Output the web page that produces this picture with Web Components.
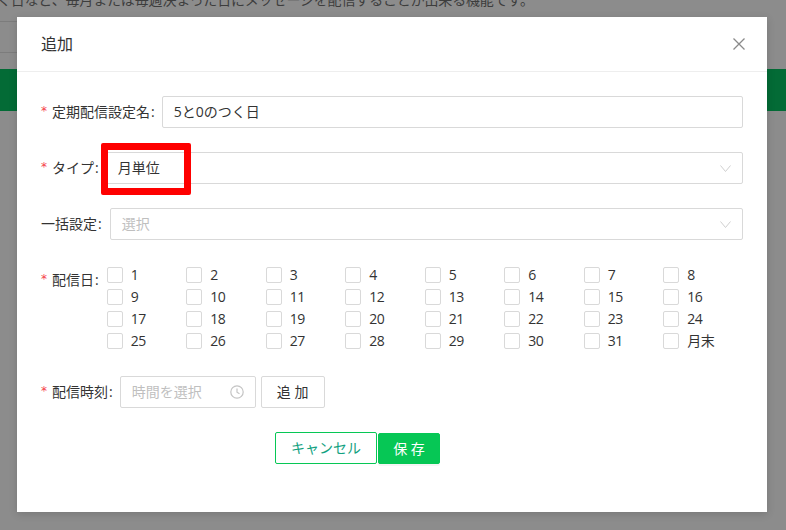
<!DOCTYPE html>
<html lang="ja">
<head>
<meta charset="utf-8">
<style>
html, body { margin: 0; height: 100%; }
body {
  width: 786px; height: 530px; overflow: hidden;
  font-family: "Open Sans", "Noto Sans CJK JP", sans-serif;
  font-size: 14px; color: #333;
}
</style>
</head>
<body>
<app-backdrop>
  <add-dialog>
    <form-row label="定期配信設定名" required><text-box value="5と0のつく日"></text-box></form-row>
    <form-row label="タイプ" required><text-box value="月単位" select marked></text-box></form-row>
    <form-row label="一括設定"><text-box placeholder="選択" select></text-box></form-row>
    <form-row label="配信日" required top><day-grid></day-grid></form-row>
    <form-row label="配信時刻" required>
      <time-box></time-box>
      <plain-button>追 加</plain-button>
    </form-row>
    <div slot="footer">
      <plain-button kind="outline">キャンセル</plain-button><plain-button kind="primary">保 存</plain-button>
    </div>
  </add-dialog>
</app-backdrop>

<script>
function define(name, css, html) {
  customElements.define(name, class extends HTMLElement {
    connectedCallback() {
      if (this.shadowRoot) return;
      const root = this.attachShadow({ mode: 'open' });
      root.innerHTML = '<style>' + css + '</style>' + (typeof html == 'function' ? html(this) : html);
    }
  });
}

define('app-backdrop', `
  :host { display: block; position: relative; width: 786px; height: 530px; background: #8c8c8c; overflow: hidden; }
  .notice { height: 25px; line-height: 8px; font-size: 14px; color: #3d3d3d; white-space: nowrap; margin: -4px 0 0 -3px; letter-spacing: -.16px; }
  .rule { width: 120px; height: 1px; background: #7c7c7c; }
  .rule.two { margin-top: 30px; }
  .band { height: 42px; background: #036b36; margin-top: 16px; }
  .dialog { position: absolute; left: 17px; top: 17px; }
`, `
  <div class="notice">く日など、毎月または毎週決まった日にメッセージを配信することが出来る機能です。</div>
  <div class="rule"></div>
  <div class="rule two"></div>
  <div class="band"></div>
  <div class="dialog"><slot></slot></div>
`);

define('add-dialog', `
  :host { display: block; width: 750px; height: 495px; background: #fff; box-shadow: 0 2px 8px rgba(0,0,0,.15); }
  header { height: 55px; box-sizing: border-box; border-bottom: 1px solid #eee; display: flex; align-items: center; justify-content: space-between; padding: 0 22px 0 24px; font-size: 16px; color: #333; }
  header span { margin-bottom: 2px; }
  header svg { display: block; }
  .body { padding: 24px 24px 0 24px; }
  .foot { padding-left: 258px; }
`, `
  <header><span>追加</span>
    <svg width="12" height="12" viewBox="0 0 12 12"><path d="M.5.5L11.5 11.5M11.5.5L.5 11.5" stroke="#8a8a8a" stroke-width="1.3" fill="none"/></svg>
  </header>
  <div class="body"><slot></slot></div>
  <div class="foot"><slot name="footer"></slot></div>
`);

define('form-row', `
  :host { display: flex; align-items: flex-start; margin-bottom: 24px; }
  label { display: flex; align-items: center; height: 32px; box-sizing: border-box; padding-bottom: 2px; white-space: nowrap; font-size: 14px; color: #333; margin-right: 7px; }
  i { font-style: normal; color: #f5414b; margin-right: 5px; font-family: "DejaVu Sans", sans-serif; font-size: 12px; line-height: 1; }
  u { text-decoration: none; margin-left: 1px; }
  .box { flex: 1; display: flex; gap: 5px; min-width: 0; }
`, el => `
  <label>${el.hasAttribute('required') ? '<i>*</i>' : ''}${el.getAttribute('label')}<u>:</u></label>
  <div class="box"><slot></slot></div>
`);

define('text-box', `
  :host { display: block; flex: 1; position: relative; }
  :host([placeholder]) { margin-left: 1px; }
  .in { height: 32px; box-sizing: border-box; border: 1px solid #d9d9d9; border-radius: 2px; display: flex; align-items: center; justify-content: space-between; padding: 0 11px; background: #fff; font-size: 14px; color: #333; }
  .in span { margin-bottom: 2px; }
  .in.ph { color: #bfbfbf; }
  svg { display: block; }
  .mark { position: absolute; left: -5px; top: -9px; width: 90px; height: 52px; box-sizing: border-box; border: 7px solid #fe0000; border-radius: 2px; pointer-events: none; }
`, el => `
  <div class="in ${el.hasAttribute('placeholder') ? 'ph' : ''}">
    <span>${el.getAttribute('value') || el.getAttribute('placeholder')}</span>
    ${el.hasAttribute('select') ? '<svg width="11" height="7" viewBox="0 0 11 7"><path d="M.5.5L5.5 6.5L10.5.5" stroke="#cfcfcf" stroke-width="1" fill="none"/></svg>' : ''}
  </div>
  ${el.hasAttribute('marked') ? '<div class="mark"></div>' : ''}
`);

define('day-grid', `
  :host { display: grid; grid-template-columns: repeat(8, 79.5px); grid-auto-rows: 22px; margin-left: 1px; }
  div { display: flex; align-items: center; font-size: 14px; color: #333; }
  b { width: 16px; height: 16px; box-sizing: border-box; border: 1px solid #d9d9d9; border-radius: 2px; margin-right: 8px; }
  span { margin-bottom: 2px; letter-spacing: -.4px; }
`, () => {
  let out = '';
  for (let d = 1; d <= 32; d++) out += '<div><b></b><span>' + (d == 32 ? '月末' : d) + '</span></div>';
  return out;
});

define('time-box', `
  :host { display: flex; width: 136px; height: 32px; box-sizing: border-box; border: 1px solid #d9d9d9; border-radius: 2px; align-items: center; justify-content: space-between; padding: 0 11px; color: #bfbfbf; font-size: 14px; }
  span { margin-bottom: 2px; }
  svg { display: block; }
`, `
  <span>時間を選択</span>
  <svg width="14" height="14" viewBox="0 0 14 14" fill="none" stroke="#c4c4c4" stroke-width="1.2"><circle cx="7" cy="7" r="6.2"/><path d="M7 3.4V7.2L9.5 8.8"/></svg>
`);

define('plain-button', `
  :host { display: inline-flex; align-items: center; justify-content: center; width: 64px; height: 32px; box-sizing: border-box; padding-bottom: 2px; border: 1px solid #d9d9d9; border-radius: 2px; background: #fff; color: #333; font-size: 14px; white-space: nowrap; vertical-align: top; }
  :host([kind=outline]) { width: 102px; margin-right: 1px; border-color: #06c755; color: #12a17f; }
  :host([kind=primary]) { width: 62px; height: 31px; margin-top: 1px; background: #06c755; border-color: #06c755; color: #fff; box-shadow: 0 2px 0 rgba(0,0,0,.04); }
`, `<slot></slot>`);
</script>
</body>
</html>
